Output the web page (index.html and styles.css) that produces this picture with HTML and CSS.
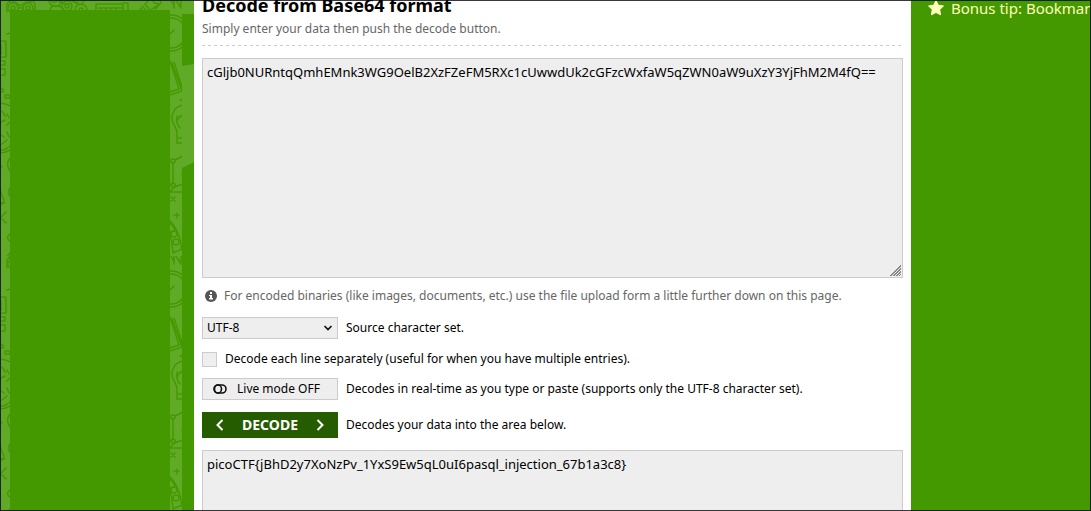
FILE: index.html
```html
<!DOCTYPE html>
<html lang="en">
<head>
<meta charset="utf-8">
<title>Base64 Decode</title>
<link rel="stylesheet" href="styles.css">
</head>
<body>
<div class="page">
  <aside class="rail">
    <svg class="doodles" aria-hidden="true">
      <defs>
        <pattern id="tile" width="194" height="256" patternUnits="userSpaceOnUse">
          <g fill="none" stroke="#490" stroke-width="1.5" stroke-linecap="round" stroke-linejoin="round">
            <circle cx="13" cy="8" r="5"/><circle cx="13" cy="8" r="2"/><circle cx="28" cy="8" r="5"/><circle cx="28" cy="8" r="2"/>
            <path d="M7 12V4l3-4M35 11V4l-2-4M10 2q5-1 8 2l2 2 3-2q4-3 9-2M18 8h5"/>
            <path d="M49 0q0 5 5 6t7-3l-3-3M51 1q3 3 6 0M50 10q1-5 7-4t7 5M60 0q4 5 9 4M71 0l7 4q5 1 6-4M74 0q0 3 4 2"/>
            <circle cx="67" cy="6" r="5"/><circle cx="67" cy="6" r="2"/><circle cx="81" cy="10" r="6"/><circle cx="81" cy="10" r="2"/>
            <path d="M96 4h27v7M96 4v6M98 8h25M101 9v2M106 9v2M111 9v2M116 9v2M123 3h5v8"/>
            <path d="M149 0l-4 4 4 5M149 11l12-8-1-3M142 6l5 5M140 8l4 4M153 0l1 3 6 1M155 9l4-4"/>
            <path d="M171 0l3 6M174 0v8M176 0l5 8M177 2l4 4V-2"/>
            <circle cx="171" cy="33" r="18"/><circle cx="171" cy="33" r="15"/><path d="M168 36l6-6"/>
            <path d="M170 61l9 28-9 3M172 63l10 28-12 4M174 62l8 25"/>
            <path d="M183 105c-9 1-13 11-10 18 2 4 4 6 4 10v10h6M177 138h6M183 115q-6 2-6 8M180 128q-4-4-3-12"/><circle cx="181" cy="100" r=".5"/>
            <circle cx="173" cy="161" r="2"/><path d="M173 163v21M175 160l8-4M182 172h1M182 175h1"/><circle cx="173" cy="185" r="2"/><path d="M170 192q5-8 13-7M170 192h13"/>
            <path d="M171 197l4 4m0-4l-4 4M177 213v5M174 215h5M182 204h2"/>
            <path d="M170 221q9 8 12 29M170 231l3 21M170 223l5 6-5 5M173 253l9-4M177 259l4 7"/>
            <circle cx="174" cy="234" r="3"/><circle cx="176" cy="242" r="3"/>
            <path d="M7 34l3-1M0 41h5q1 0 1 1v15H0M1 45v9M0 61h5v4H0M0 69h5v6H0M0 89h3v3H0M5 95h5v3H5z"/>
            <circle cx="-2" cy="128" r="25"/><path d="M-2 150q12 2 19-16M2 111l3 5M7 114l2 4M1 122l4-2M7 125l3-3M1 135l3 2M7 132l2 5M2 144l5-4"/>
            <path d="M10 158q-5 6 0 13M0 166l2 1M0 190l4 11q1 3-3 3M0 202l3 1M0 218l6-6M1 218l5 5M10 188q-3 5 0 8M10 234q-5 4 0 7M10 253l-3 4q-2 8 1 14"/>
          </g>
        </pattern>
      </defs>
      <rect width="194" height="100%" fill="#60aa27"/>
      <rect width="194" height="100%" fill="url(#tile)"/>
      <rect x="182" y="14" width="12" height="100%" fill="#490"/>
      <path d="M182 0h12v14h-12zM182 66l12-2v98l-12 6z" fill="#60aa27"/>
    </svg>
    <div class="ad"></div>
  </aside>
  <main class="content">
    <h1 class="title">Decode from Base64 format</h1>
    <p class="subtitle">Simply enter your data then push the decode button.</p>
    <form class="form">
      <textarea class="area" aria-label="Data to decode" spellcheck="false">cGljb0NURntqQmhEMnk3WG9OelB2XzFZeFM5RXc1cUwwdUk2cGFzcWxfaW5qZWN0aW9uXzY3YjFhM2M4fQ==</textarea>
      <p class="note">
        <svg class="info" viewBox="0 0 12 12" aria-hidden="true"><circle cx="6" cy="6" r="6" fill="#555"/><path d="M5 2h2v2H5zM4 5h3v3h1v1.500H4V8h1V6H4z" fill="#fff"/></svg>
        For encoded binaries (like images, documents, etc.) use the file upload form a little further down on this page.
      </p>
      <div class="row">
        <span class="picker">
          <select class="control select" id="charset"><option>UTF-8</option></select>
          <svg class="caret" viewBox="0 0 10 6" aria-hidden="true"><path d="M1.500 1l3.500 3.500L8.500 1" fill="none" stroke="#111" stroke-width="1.700"/></svg>
        </span>
        <label for="charset">Source character set.</label>
      </div>
      <div class="row row-check">
        <input class="check" type="checkbox" id="lines">
        <label for="lines">Decode each line separately (useful for when you have multiple entries).</label>
      </div>
      <div class="row row-live">
        <button class="control live" type="button">
          <svg class="toggle" viewBox="0 0 14 10" aria-hidden="true"><g fill="none" stroke="#111" stroke-width="1.600"><rect x="1" y="1" width="12" height="8" rx="4"/><ellipse cx="5" cy="5" rx="3.500" ry="4"/></g></svg>
          Live mode OFF
        </button>
        <span>Decodes in real-time as you type or paste (supports only the UTF-8 character set).</span>
      </div>
      <div class="row row-decode">
        <button class="control decode" type="submit">
          <svg class="chevron" viewBox="0 0 8 12" aria-hidden="true"><path d="M6.500 1L1.500 6l5 5" fill="none" stroke="#fff" stroke-width="2"/></svg>
          DECODE
          <svg class="chevron" viewBox="0 0 8 12" aria-hidden="true"><path d="M1.500 1l5 5-5 5" fill="none" stroke="#fff" stroke-width="2"/></svg>
        </button>
        <span>Decodes your data into the area below.</span>
      </div>
      <textarea class="area output" aria-label="Decoded data" spellcheck="false" readonly>picoCTF{jBhD2y7XoNzPv_1YxS9Ew5qL0uI6pasql_injection_67b1a3c8}</textarea>
    </form>
  </main>
  <aside class="side">
    <p class="tip"><svg class="star" viewBox="0 0 16 16" aria-hidden="true"><path d="M8 .5l2.300 4.700 5.200.8-3.800 3.600.9 5.200L8 12.400l-4.600 2.400.9-5.200L.5 6l5.200-.8z" fill="#ffb" stroke="#ffb" stroke-linejoin="round"/></svg>Bonus tip: Bookmark us!</p>
  </aside>
</div>
</body>
</html>
```
FILE: styles.css
```css
* { box-sizing: border-box; }
body {
  margin: 0;
  background: #490;
  color: #000;
  font: 12px/18px "Noto Sans", sans-serif;
}
h1, p { margin: 0; }
.page {
  position: relative;
  display: grid;
  grid-template-columns: 194px minmax(0, 1fr) 180px;
  height: 100vh;
  overflow: hidden;
}
.page::after {
  content: "";
  position: absolute;
  inset: 0;
  border: 1px solid rgba(10, 5, 12, .8);
  pointer-events: none;
}
.rail { position: relative; display: flex; padding: 10px 24px 0 10px; }
.doodles { position: absolute; inset: 0; width: 100%; height: 100%; }
.ad { position: relative; flex: 1; background: #490; }
.content { background: #fff; padding: 0 8px; }
.title { font-size: 18px; line-height: 10px; }
.subtitle {
  margin-top: 10px;
  padding-bottom: 8px;
  background: repeating-linear-gradient(90deg, #ccc 0 3px, transparent 3px 6px) bottom / 100% 1px no-repeat;
  color: #666;
}
.form { display: flex; flex-direction: column; padding-top: 12px; }
.area {
  display: block;
  width: 100%;
  height: 220px;
  padding: 4px;
  border: 1px solid #ccc;
  border-radius: 0;
  background: #eee;
  color: #000;
  font: inherit;
  font-size: 13px;
  outline: 0;
  resize: vertical;
}
.area::-webkit-resizer {
  border: solid #eee;
  border-width: 0 1px 1px 0;
  background: linear-gradient(135deg, #eee 56%, transparent 56%), repeating-linear-gradient(135deg, #888 0 1px, #eee 1px 2px);
}
.note { display: flex; align-items: center; gap: 7px; margin-top: 9px; padding-left: 3px; color: #666; }
.info { width: 12px; height: 12px; }
.row { display: flex; align-items: center; gap: 8px; margin-top: 12px; }
.row-check { margin-top: 11px; }
.row-live { margin-top: 10px; }
.picker { position: relative; display: flex; }
.control {
  width: 136px;
  height: 22px;
  border: 1px solid #ccc;
  border-radius: 0;
  background: #eee;
  color: #000;
  font: inherit;
}
.select { appearance: none; padding: 0 4px; }
.caret { position: absolute; right: 5px; top: 8px; width: 10px; height: 6px; pointer-events: none; }
.check {
  appearance: none;
  width: 15px;
  height: 15px;
  margin: 0;
  border: 1px solid #ccc;
  background: #eee;
}
.live { display: flex; align-items: center; gap: 10px; padding: 0 10px; }
.toggle { width: 14px; height: 10px; }
.decode {
  display: flex;
  align-items: center;
  justify-content: space-between;
  height: 26px;
  padding: 0 14px;
  border: 0;
  background: #265c00;
  color: #fff;
  font-size: 14px;
  font-weight: 700;
}
.chevron { width: 8px; height: 12px; }
.output { margin-top: 12px; flex-shrink: 0; }
.side { overflow: hidden; padding-left: 17px; }
.tip {
  display: flex;
  align-items: center;
  gap: 7px;
  color: #ffb;
  font-size: 15px;
  line-height: 16px;
  white-space: nowrap;
}
.star { width: 16px; height: 16px; flex-shrink: 0; }
```
